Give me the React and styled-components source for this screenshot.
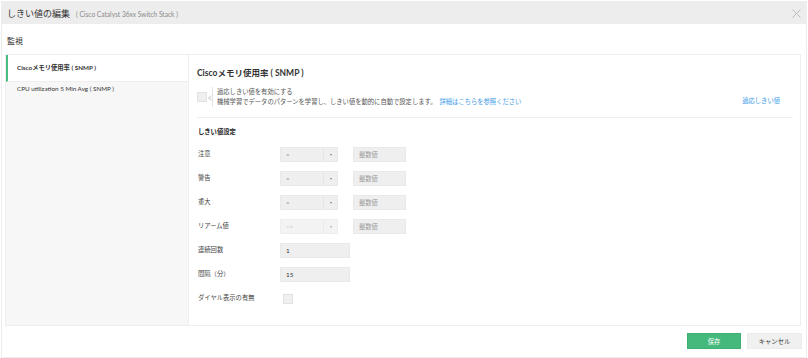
import React from "react";
import styled, { createGlobalStyle } from "styled-components";

const Global = createGlobalStyle`
  html, body { margin: 0; padding: 0; background: #fff; }
  body { font-family: "Lato", "Noto Sans CJK JP", sans-serif; color: #333; }
  * { box-sizing: border-box; }
`;

const Dialog = styled.div`
  margin: 1px 0 0 1px;
  width: 806px;
  height: 357px;
  border: 1px solid #ececec;
  display: flex;
  flex-direction: column;
  background: #fff;
`;

const Header = styled.div`
  height: 22px;
  background: #ededed;
  display: flex;
  align-items: center;
  padding: 0 4px 0 5px;
`;

const Title = styled.span`
  font-size: 9px;
  color: #333;
`;

const Sub = styled.span`
  font-size: 6.6px;
  color: #8a8a8a;
  margin-left: 6px;
  margin-top: 1px;
`;

const Close = styled.svg`
  margin-left: auto;
  width: 9px;
  height: 9px;
  margin-right: 1px;
`;

const Section = styled.div`
  height: 30px;
  display: flex;
  align-items: center;
  padding: 2px 0 0 5px;
  font-size: 8px;
  color: #333;
`;

const Panel = styled.div`
  margin: 0 5px 0 3px;
  height: 272px;
  border: 1px solid #eeeeee;
  display: flex;
`;

const Sidebar = styled.div`
  width: 183px;
  background: #f7f7f7;
  border-right: 1px solid #eeeeee;
  display: flex;
  flex-direction: column;
`;

const NavItem = styled.div`
  height: ${(p) => (p.$active ? "27px" : "auto")};
  padding: ${(p) => (p.$active ? "0 0 2px 9px" : "3px 0 0 9px")};
  display: flex;
  align-items: center;
  font-size: 6.3px;
  color: #333;
  font-weight: ${(p) => (p.$active ? 700 : 400)};
  background: ${(p) => (p.$active ? "#fff" : "transparent")};
  border-left: 2px solid ${(p) => (p.$active ? "#4cbb7f" : "transparent")};
  border-bottom: ${(p) => (p.$active ? "1px solid #eeeeee" : "none")};
`;

const Content = styled.div`
  flex: 1;
  padding: 12px 7px 0 8px;
  display: flex;
  flex-direction: column;
`;

const PanelTitle = styled.div`
  font-size: 8.5px;
  font-weight: 700;
  color: #333;
  line-height: 12px;
`;

const AdaptiveRow = styled.div`
  display: flex;
  align-items: center;
  margin-top: 8px;
  padding-bottom: 10px;
  border-bottom: 1px solid #eeeeee;
`;

const Check = styled.span`
  display: block;
  width: 10px;
  height: 10px;
  background: #efefef;
  border: 1px solid #e2e2e2;
  flex: none;
`;

const Desc = styled.div`
  position: relative;
  margin-left: 5px;
  padding-left: 4px;
  border-left: 1px solid #e3e3e3;
  font-size: 6.3px;
  line-height: 10px;
  color: #555;
  &::before {
    content: "";
    position: absolute;
    left: -4px;
    top: 9px;
    width: 3px;
    height: 3px;
    border-left: 1px solid #cfcfcf;
    border-bottom: 1px solid #cfcfcf;
    transform: rotate(45deg);
  }
`;

const Link = styled.a`
  color: #3d9be9;
  text-decoration: none;
  font-size: 6.3px;
  margin-left: ${(p) => (p.$right ? "auto" : "3px")};
  margin-right: ${(p) => (p.$right ? "13px" : "0")};
  margin-top: ${(p) => (p.$right ? "6px" : "0")};
`;

const SubHead = styled.div`
  font-size: 6.3px;
  font-weight: 700;
  color: #222;
  margin: 9px 0 0 1px;
  line-height: 10px;
`;

const Form = styled.div`
  display: grid;
  grid-template-columns: 82px 58px 15px 53px;
  row-gap: 9px;
  margin-top: 10px;
  margin-left: 1px;
  align-items: start;
`;

const Label = styled.div`
  grid-column: 1;
  font-size: 6.3px;
  color: #444;
  padding-top: 2px;
  line-height: 9px;
`;

const Select = styled.div`
  grid-column: 2;
  height: 15px;
  background: #efefef;
  border: 1px solid #e9e9e9;
  display: flex;
  font-size: 6px;
  color: ${(p) => (p.$disabled ? "#bbb" : "#777")};
  opacity: ${(p) => (p.$disabled ? 0.75 : 1)};
`;

const SelValue = styled.span`
  flex: 1;
  display: flex;
  align-items: center;
  padding-left: 5px;
`;

const Caret = styled.span`
  width: 14px;
  border-left: 1px solid #e4e4e4;
  display: flex;
  align-items: center;
  justify-content: center;
  &::after {
    content: "";
    border-left: 1.5px solid transparent;
    border-right: 1.5px solid transparent;
    border-top: 2px solid #888;
  }
`;

const Input = styled.div`
  grid-column: ${(p) => p.$col || 4} / span ${(p) => p.$span || 1};
  width: ${(p) => p.$w}px;
  height: 15px;
  background: #efefef;
  border: 1px solid #e9e9e9;
  display: flex;
  align-items: center;
  padding-left: 5px;
  font-size: 6.3px;
  color: ${(p) => (p.$ph ? "#999" : "#333")};
`;

const CheckCell = styled.div`
  grid-column: 2;
  padding: 3px 0 0 3px;
`;

const Footer = styled.div`
  flex: 1;
  display: flex;
  justify-content: flex-end;
  align-items: center;
  gap: 6px;
  padding: 0 4px 1px 0;
`;

const Button = styled.button`
  height: 16px;
  width: ${(p) => p.$w}px;
  font-family: inherit;
  font-size: 6.3px;
  padding: 0;
  background: ${(p) => (p.$primary ? "#45b97c" : "#f0f0f0")};
  color: ${(p) => (p.$primary ? "#fff" : "#333")};
  border: 1px solid ${(p) => (p.$primary ? "#3faf73" : "#ececec")};
`;

const rows = [
  { label: "注意", op: ">" },
  { label: "警告", op: ">" },
  { label: "重大", op: ">" },
  { label: "リアーム値", op: "<=", disabled: true },
];

export default function App() {
  return (
    <>
      <Global />
      <Dialog>
        <Header>
          <Title>しきい値の編集</Title>
          <Sub>( Cisco Catalyst 36xx Switch Stack )</Sub>
          <Close viewBox="0 0 9 9">
            <path d="M0.5 0.5 L8.5 8.5 M8.5 0.5 L0.5 8.5" stroke="#b5b5b5" strokeWidth="0.9" fill="none" />
          </Close>
        </Header>
        <Section>監視</Section>
        <Panel>
          <Sidebar>
            <NavItem $active>Ciscoメモリ使用率 ( SNMP )</NavItem>
            <NavItem>CPU utilization 5 Min Avg ( SNMP )</NavItem>
          </Sidebar>
          <Content>
            <PanelTitle>Ciscoメモリ使用率 ( SNMP )</PanelTitle>
            <AdaptiveRow>
              <Check />
              <Desc>
                <div>適応しきい値を有効にする</div>
                <div>
                  機械学習でデータのパターンを学習し、しきい値を動的に自動で設定します。
                  <Link>詳細はこちらを参照ください</Link>
                </div>
              </Desc>
              <Link $right>適応しきい値</Link>
            </AdaptiveRow>
            <SubHead>しきい値設定</SubHead>
            <Form>
              {rows.map((r) => (
                <React.Fragment key={r.label}>
                  <Label>{r.label}</Label>
                  <Select $disabled={r.disabled}>
                    <SelValue>{r.op}</SelValue>
                    <Caret />
                  </Select>
                  <Input $w={53} $ph>整数値</Input>
                </React.Fragment>
              ))}
              <Label>連続回数</Label>
              <Input $col={2} $span={3} $w={70}>1</Input>
              <Label>間隔（分）</Label>
              <Input $col={2} $span={3} $w={70}>15</Input>
              <Label>ダイヤル表示の有無</Label>
              <CheckCell>
                <Check />
              </CheckCell>
            </Form>
          </Content>
        </Panel>
        <Footer>
          <Button $primary $w={54}>保存</Button>
          <Button $w={55}>キャンセル</Button>
        </Footer>
      </Dialog>
    </>
  );
}
